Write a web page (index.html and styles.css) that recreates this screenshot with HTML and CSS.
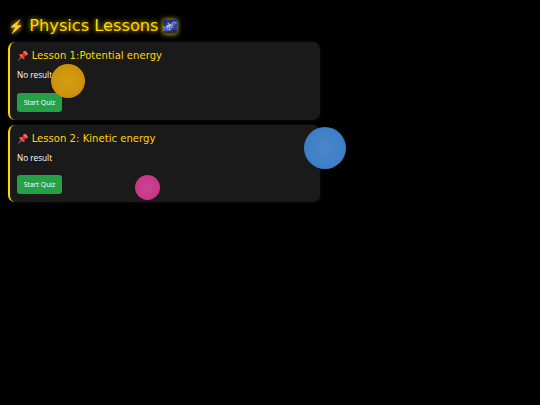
FILE: index.html
```html
<!DOCTYPE html>
<html lang="en">
<head>
<meta charset="utf-8">
<title>Physics Lessons</title>
<link rel="stylesheet" href="styles.css">
</head>
<body>
<main class="page">
  <h1 class="title"><span class="emoji">⚡️</span> Physics Lessons<span class="emoji galaxy">🌌</span></h1>
  <section class="card">
    <h2 class="lesson"><span class="emoji">📌</span> Lesson 1:Potential energy</h2>
    <p class="result">No result</p>
    <button class="quiz">Start Quiz</button>
  </section>
  <section class="card">
    <h2 class="lesson"><span class="emoji">📌</span> Lesson 2: Kinetic energy</h2>
    <p class="result">No result</p>
    <button class="quiz">Start Quiz</button>
  </section>
</main>
<div class="ball ball-amber"></div>
<div class="ball ball-blue"></div>
<div class="ball ball-pink"></div>
</body>
</html>
```

FILE: styles.css
```css
html, body { margin: 0; height: 100%; background: #000; overflow: hidden; }
body { font-family: "Open Sans", "Noto Sans", sans-serif; color: #fff; }
.page { width: 312px; padding: 15px 0 0 8px; display: flex; flex-direction: column; gap: 5px; }
.title {
  margin: 0; height: 22px; line-height: 22px; font-family: "DejaVu Sans", sans-serif;
  font-size: 16.2px; font-weight: 400; color: #ffd700; white-space: nowrap;
  text-shadow: 0 0 5px #ffd700;
}
.emoji { font-family: "Noto Color Emoji", sans-serif; }
.title .emoji { font-size: 13px; }
.title .galaxy { margin-left: 4px; }
.card {
  height: 77.5px; box-sizing: border-box; padding: 6px 7px; background: #1a1a1a;
  border-left: 2px solid #ffd700; border-radius: 7px;
  box-shadow: 0 0 4px rgba(255,255,255,.06);
}
.lesson {
  margin: 0; height: 16px; line-height: 16px; font-family: "DejaVu Sans", sans-serif;
  font-size: 10.1px; font-weight: 400; color: #ffd700; white-space: nowrap;
}
.lesson .emoji { font-size: 9.2px; }
.result { margin: 4px 0 0; height: 14px; line-height: 14px; font-size: 8.2px; }
.quiz {
  display: block; margin-top: 10.5px; width: 45px; height: 19px; padding: 0; border: 0;
  border-radius: 3px; background: #25a046; color: #fff; font: 6.9px "Open Sans", sans-serif;
}
.ball { position: absolute; border-radius: 50%; }
.ball-amber { left: 51px; top: 64px; width: 34px; height: 34px; background: radial-gradient(circle, #d4a012, #cb8a06); }
.ball-blue { left: 304px; top: 127px; width: 42px; height: 42px; background: radial-gradient(circle, #4d86c6, #337ccb); }
.ball-pink { left: 135px; top: 175px; width: 25px; height: 25px; background: radial-gradient(circle, #c8488f, #c92c85); }
```
